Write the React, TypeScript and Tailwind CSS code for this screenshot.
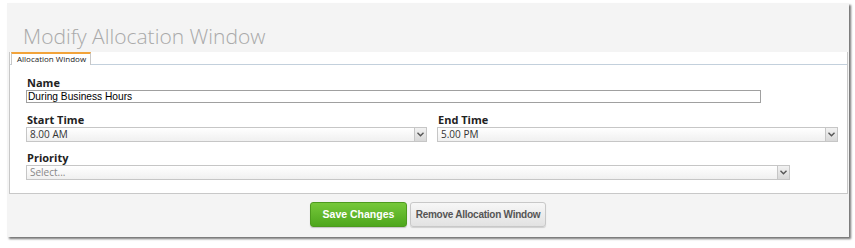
import React from 'react';

function Chevron() {
  return (
    <svg width="7" height="5" viewBox="0 0 7 5">
      <path d="M0.5 0.8 L3.5 3.8 L6.5 0.8" fill="none" stroke="#555" strokeWidth="1.4" />
    </svg>
  );
}

function Select({ value, muted }: { value: string; muted?: boolean }) {
  return (
    <div className="flex h-[15px] w-full border border-[#c6c6c6] bg-gradient-to-b from-white to-[#f0f0f0]">
      <div
        className={
          'flex-1 pl-[3px] text-[10px] leading-[13px] font-["Open_Sans",sans-serif] ' +
          (muted ? 'text-[#888]' : 'text-[#333]')
        }
      >
        {value}
      </div>
      <div className="flex w-[12px] items-center justify-center border-l border-[#c6c6c6] bg-gradient-to-b from-[#f2f2f2] to-[#d8d8d8]">
        <Chevron />
      </div>
    </div>
  );
}

export default function App() {
  return (
    <main className="h-[248px] w-[855px] bg-white pl-[7px] pt-[3px]">
      <div className="flex h-[234px] w-[842px] flex-col bg-[#f4f4f4] shadow-[2px_2px_2px_rgba(0,0,0,0.55)]">
        {/* header */}
        <div className="h-[49px] pl-[16px] pt-[19px]">
          <h1 className="text-[21px] leading-[28px] font-light text-[#a9a9a9] font-['Open_Sans',sans-serif]">
            Modify Allocation Window
          </h1>
        </div>

        {/* form box */}
        <div className="ml-[2px] mr-[1px] h-[142px] border-x border-b border-[#c8c8c8] bg-white">
          <div className="flex h-[13px] border-b border-[#c3d0dc]">
            <div className="ml-[1px] -mb-px h-[13px] w-[80px] border-x border-t-2 border-x-[#c8c8c8] border-t-[#f2a33a] bg-white pl-[5px] text-[8px] leading-[10px] text-[#222] font-['Open_Sans',sans-serif]">
              Allocation Window
            </div>
          </div>

          <div className="pl-[16px] pr-[9px] pt-[11px] font-['Open_Sans',sans-serif]">
            <label className="block pl-px text-[11px] font-bold leading-[14px] text-[#222]">Name</label>
            <input
              type="text"
              readOnly
              value="During Business Hours"
              className="block h-[13px] w-[735px] border border-[#a0a0a0] bg-white px-[1px] text-[10.2px] leading-[11px] text-black font-['Liberation_Sans',sans-serif] outline-none"
            />

            <div className="mt-[10px] flex gap-[10px]">
              <div className="w-[401px]">
                <label className="block pl-px text-[11px] font-bold leading-[14px] text-[#222]">Start Time</label>
                <Select value="8.00 AM" />
              </div>
              <div className="w-[401px]">
                <label className="block pl-px text-[11px] font-bold leading-[14px] text-[#222]">End Time</label>
                <Select value="5.00 PM" />
              </div>
            </div>

            <div className="mt-[9px] w-[764px]">
              <label className="block pl-px text-[11px] font-bold leading-[14px] text-[#222]">Priority</label>
              <Select value="Select..." muted />
            </div>
          </div>
        </div>

        {/* footer */}
        <div className="flex flex-1 items-start justify-center gap-[3px] pt-[8px] font-['Liberation_Sans',sans-serif]">
          <button className="h-[25px] w-[97px] whitespace-nowrap rounded-[3px] border border-[#4d9a1e] bg-gradient-to-b from-[#76c83a] to-[#4ea71c] px-0 text-[10.5px] font-bold text-white shadow-[0_1px_1px_rgba(0,0,0,0.2)]">
            Save Changes
          </button>
          <button className="h-[25px] w-[136px] whitespace-nowrap rounded-[3px] border border-[#c8c8c8] bg-gradient-to-b from-[#f7f7f7] to-[#e2e2e2] px-0 text-[10px] tracking-[-0.25px] font-bold text-[#555] shadow-[0_1px_1px_rgba(0,0,0,0.15)]">
            Remove Allocation Window
          </button>
        </div>
      </div>
    </main>
  );
}
